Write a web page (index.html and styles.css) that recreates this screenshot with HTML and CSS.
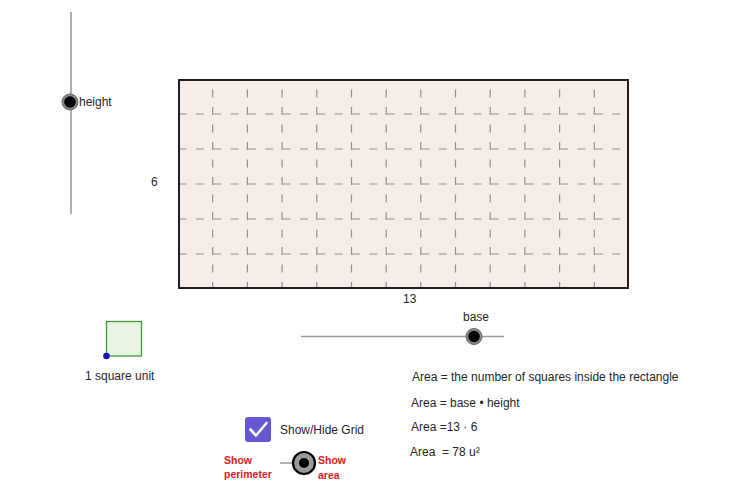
FILE: index.html
```html
<!DOCTYPE html>
<html>
<head>
<meta charset="utf-8">
<title>Area of a rectangle</title>
<link rel="stylesheet" href="styles.css">
</head>
<body>
<div class="applet">
<svg class="canvas" width="750" height="488" viewBox="0 0 750 488" xmlns="http://www.w3.org/2000/svg">
  <!-- height slider -->
  <line class="slider-track" x1="71" y1="12" x2="71" y2="214"/>
  <circle class="knob-ring" cx="70" cy="102" r="8"/>
  <circle class="knob-dot" cx="70" cy="102" r="5.8"/>
  <text class="lbl" x="79" y="106">height</text>

  <!-- rectangle -->
  <rect class="rect-fill" x="179" y="80" width="449" height="208"/>
  <g class="grid-v">
    <line x1="212.7" y1="80" x2="212.7" y2="288"/>
    <line x1="247.4" y1="80" x2="247.4" y2="288"/>
    <line x1="282.1" y1="80" x2="282.1" y2="288"/>
    <line x1="316.8" y1="80" x2="316.8" y2="288"/>
    <line x1="351.5" y1="80" x2="351.5" y2="288"/>
    <line x1="386.2" y1="80" x2="386.2" y2="288"/>
    <line x1="420.8" y1="80" x2="420.8" y2="288"/>
    <line x1="455.5" y1="80" x2="455.5" y2="288"/>
    <line x1="490.2" y1="80" x2="490.2" y2="288"/>
    <line x1="524.9" y1="80" x2="524.9" y2="288"/>
    <line x1="559.6" y1="80" x2="559.6" y2="288"/>
    <line x1="594.3" y1="80" x2="594.3" y2="288"/>
  </g>
  <g class="grid-h">
    <line x1="178.5" y1="114" x2="628" y2="114"/>
    <line x1="178.5" y1="149" x2="628" y2="149"/>
    <line x1="178.5" y1="184" x2="628" y2="184"/>
    <line x1="178.5" y1="219" x2="628" y2="219"/>
    <line x1="178.5" y1="254" x2="628" y2="254"/>
  </g>
  <rect class="rect-border" x="179" y="80" width="449" height="208"/>
  <text class="lbl" x="151" y="186">6</text>
  <text class="lbl" x="403" y="303">13</text>

  <!-- base slider -->
  <text class="lbl" x="463" y="321">base</text>
  <line class="slider-track" x1="301" y1="336.5" x2="504" y2="336.5"/>
  <circle class="knob-ring" cx="474" cy="336.5" r="8"/>
  <circle class="knob-dot" cx="474" cy="336.5" r="5.8"/>

  <!-- unit square -->
  <rect class="unit" x="106.5" y="321.5" width="35" height="34.5"/>
  <circle class="unit-pt" cx="106.5" cy="356" r="3.3"/>
  <text class="lbl" x="85" y="380">1 square unit</text>

  <!-- area texts -->
  <text class="lbl" x="412" y="381">Area = the number of squares inside the rectangle</text>
  <text class="lbl" x="411" y="407">Area = base • height</text>
  <text class="lbl" x="411" y="431">Area =13 · 6</text>
  <text class="lbl" x="410" y="456" xml:space="preserve">Area  = 78 u²</text>

  <!-- checkbox -->
  <rect class="chk" x="245" y="417" width="26" height="25" rx="3"/>
  <path class="chk-mark" d="M250.5 429.5 L256 435.5 L266.5 423"/>
  <text class="lbl" x="280" y="434">Show/Hide Grid</text>

  <!-- toggle -->
  <line class="toggle-line" x1="280" y1="463" x2="292" y2="463"/>
  <circle class="toggle-ring" cx="304" cy="463" r="11"/>
  <circle class="knob-dot" cx="304" cy="463" r="5"/>
  <text class="red" x="224" y="464">Show</text>
  <text class="red" x="224" y="478">perimeter</text>
  <text class="red" x="318" y="464">Show</text>
  <text class="red" x="318" y="479">area</text>
</svg>
</div>
</body>
</html>
```

FILE: styles.css
```css
html, body {
  margin: 0;
  padding: 0;
  background: #ffffff;
}

.applet {
  width: 750px;
  height: 488px;
  overflow: hidden;
}

.canvas {
  display: block;
}

.lbl {
  font-family: "Liberation Sans", Arial, sans-serif;
  font-size: 12px;
  fill: #262626;
}

.red {
  font-family: "Liberation Sans", Arial, sans-serif;
  font-size: 10.5px;
  font-weight: bold;
  fill: #e0201c;
}

.slider-track {
  stroke: #9a9a9a;
  stroke-width: 1.6;
}

.knob-ring {
  fill: #8a8a8a;
  stroke: #666666;
  stroke-width: 1;
}

.knob-dot {
  fill: #000000;
}

.rect-fill {
  fill: #f6ece8;
}

.rect-border {
  fill: none;
  stroke: #1e1e1e;
  stroke-width: 2;
}

.grid-v line {
  stroke: #948e8c;
  stroke-width: 1.2;
  stroke-dasharray: 8 9.5;
  stroke-dashoffset: 8;
}

.grid-h line {
  stroke: #948e8c;
  stroke-width: 1.2;
  stroke-dasharray: 8 9.35;
}

.unit {
  fill: #e6f4e1;
  stroke: #3f9a35;
  stroke-width: 1.3;
}

.unit-pt {
  fill: #1515b0;
}

.chk {
  fill: #6557d2;
}

.chk-mark {
  fill: none;
  stroke: #ffffff;
  stroke-width: 2.6;
  stroke-linecap: round;
  stroke-linejoin: round;
}

.toggle-line {
  stroke: #666666;
  stroke-width: 1;
}

.toggle-ring {
  fill: #9c9c9c;
  stroke: #000000;
  stroke-width: 2.2;
}
```
